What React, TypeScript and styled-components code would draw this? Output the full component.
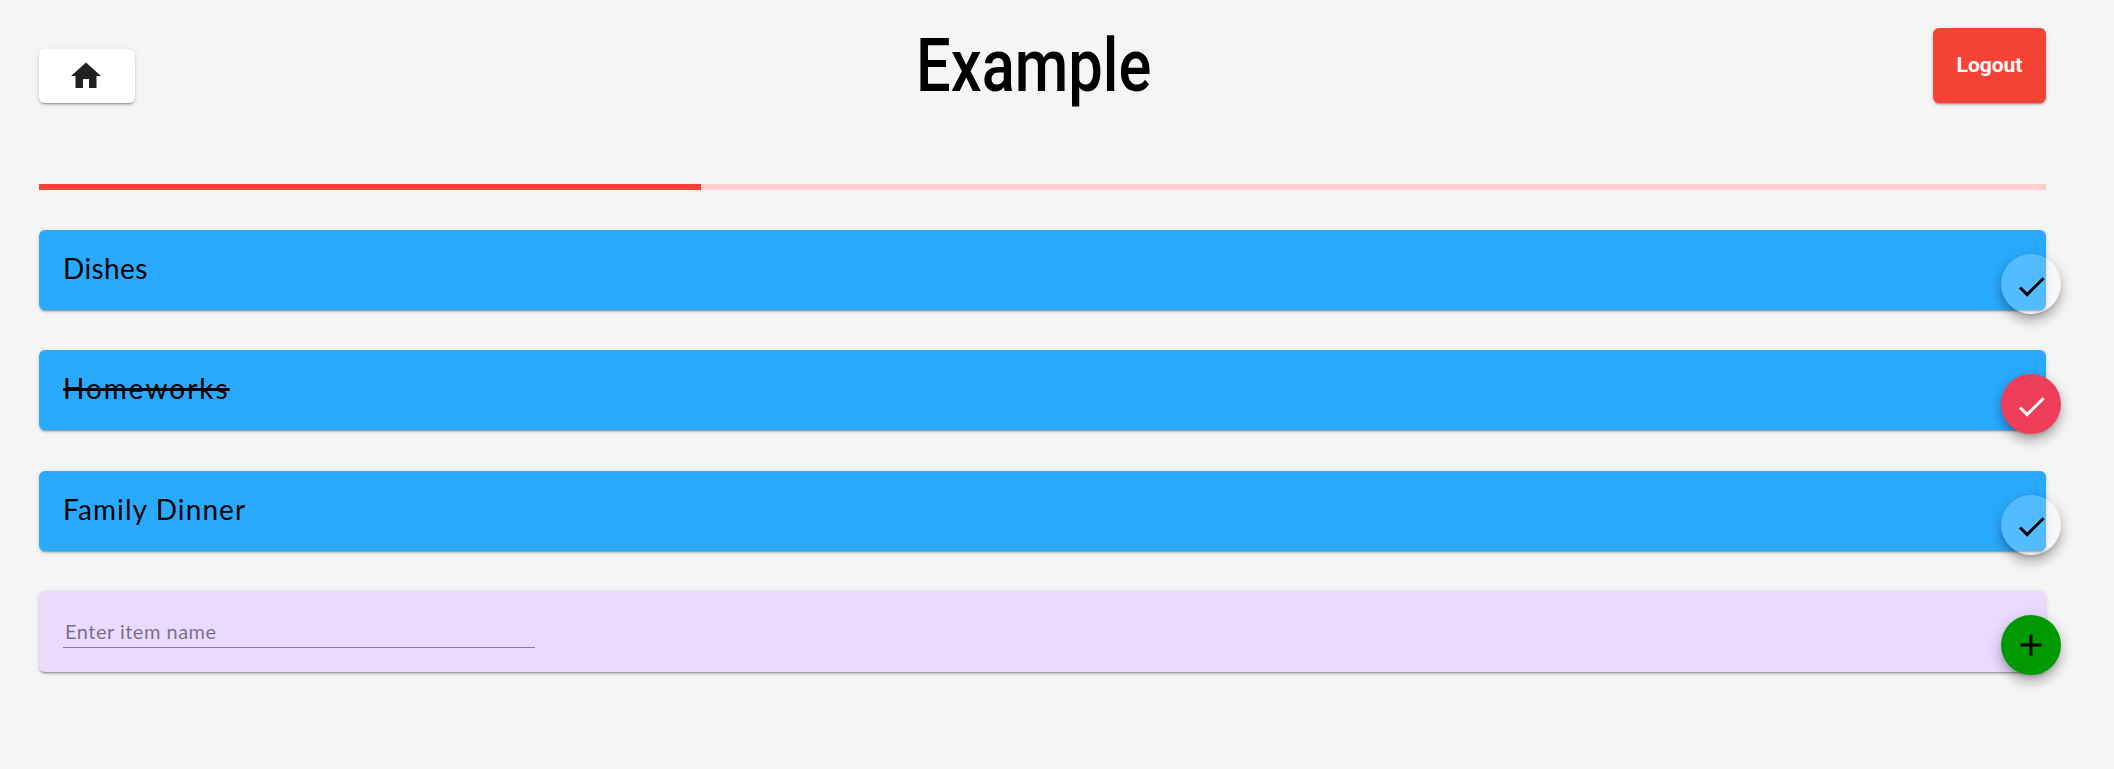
import React from "react"
import styled, { createGlobalStyle } from "styled-components"
import { MdAdd, MdCheck, MdHome } from "react-icons/md"

const GlobalStyle = createGlobalStyle`
  html, body {
    margin: 0;
    padding: 0;
    background: #f5f5f5;
    font-family: "Roboto", "Liberation Sans", sans-serif;
  }
`

const Page = styled.div`
  box-sizing: border-box;
  width: 2114px;
  height: 769px;
  padding: 28px 68px 0 39px;
  overflow: hidden;
`

const Header = styled.header`
  display: flex;
  justify-content: space-between;
  align-items: flex-end;
  height: 75px;
`

const HomeButton = styled.button`
  display: flex;
  align-items: center;
  justify-content: center;
  width: 96px;
  height: 54px;
  padding: 0 2px 0 0;
  border: 0;
  border-radius: 6px;
  background: #fff;
  color: #212121;
  box-shadow: 0 3px 1px -2px rgba(0, 0, 0, 0.2), 0 2px 2px 0 rgba(0, 0, 0, 0.14), 0 1px 5px 0 rgba(0, 0, 0, 0.12);
`

const Title = styled.h1`
  align-self: flex-start;
  margin: 0;
  font-family: "Roboto", sans-serif;
  font-size: 74px;
  font-weight: 500;
  line-height: 75px;
  color: #000;
  transform: scaleX(0.83);
`

const LogoutButton = styled.button`
  width: 113px;
  height: 75px;
  padding: 0 0 2px;
  border: 0;
  border-radius: 6px;
  background: #f44336;
  color: #fff;
  font-family: "Roboto", sans-serif;
  font-size: 21px;
  font-weight: 700;
  box-shadow: 0 3px 1px -2px rgba(0, 0, 0, 0.2), 0 2px 2px 0 rgba(0, 0, 0, 0.14), 0 1px 5px 0 rgba(0, 0, 0, 0.12);
`

const Progress = styled.div`
  height: 6px;
  margin-top: 81px;
  background: #ffcdd2;
`

const ProgressFill = styled.div`
  height: 100%;
  background: #f44336;
`

const List = styled.div`
  display: flex;
  flex-direction: column;
  gap: 40.33px;
  margin-top: 40px;
`

const Card = styled.div`
  position: relative;
  box-sizing: border-box;
  height: 80px;
  padding: 21px 24px 0;
  border-radius: 6px;
  background: #29aaff;
  box-shadow: 0 3px 1px -2px rgba(0, 0, 0, 0.2), 0 2px 2px 0 rgba(0, 0, 0, 0.14), 0 1px 5px 0 rgba(0, 0, 0, 0.12);
`

const InputCard = styled(Card)`
  height: 81px;
  background: #ebdaff;
`

const ItemName = styled.span<{ $done?: boolean; $tracking: number }>`
  font-family: "Lato", sans-serif;
  font-size: 28px;
  font-weight: 400;
  line-height: 34px;
  letter-spacing: ${(p) => p.$tracking}px;
  color: #000;
  text-decoration: ${(p) => (p.$done ? "line-through" : "none")};
  text-decoration-thickness: 3px;
`

const NameInput = styled.input`
  display: block;
  box-sizing: border-box;
  width: 472px;
  height: 36px;
  padding: 4px 0 0 2px;
  border: 0;
  border-bottom: 1px solid rgba(0, 0, 0, 0.42);
  outline: none;
  background: transparent;
  font-family: "Lato", sans-serif;
  font-size: 20px;
  font-weight: 400;
  letter-spacing: 0.5px;
  color: #000;

  &::placeholder {
    color: rgba(0, 0, 0, 0.5);
    opacity: 1;
  }
`

const Fab = styled.button<{ $bg: string; $color: string }>`
  position: absolute;
  right: -15px;
  bottom: -4px;
  display: flex;
  align-items: center;
  justify-content: center;
  width: 60px;
  height: 60px;
  padding: 0;
  border: 0;
  border-radius: 50%;
  background: ${(p) => p.$bg};
  color: ${(p) => p.$color};
  box-shadow: 0 5px 5px -3px rgba(0, 0, 0, 0.2), 0 8px 10px 1px rgba(0, 0, 0, 0.14), 0 3px 14px 2px rgba(0, 0, 0, 0.12);

  svg {
    transform: translate(0, 2px);
  }
`

const AddFab = styled(Fab)`
  bottom: -3px;

  svg {
    transform: none;
  }
`

const items = [
  { name: "Dishes", done: false, tracking: 0.4 },
  { name: "Homeworks", done: true, tracking: 2 },
  { name: "Family Dinner", done: false, tracking: 1.1 },
]

export default function App() {
  return (
    <Page>
      <GlobalStyle />
      <Header>
        <HomeButton aria-label="Home">
          <MdHome size={36} />
        </HomeButton>
        <Title>Example</Title>
        <LogoutButton>Logout</LogoutButton>
      </Header>
      <Progress>
        <ProgressFill style={{ width: "33%" }} />
      </Progress>
      <List>
        {items.map((item) => (
          <Card key={item.name}>
            <ItemName $done={item.done} $tracking={item.tracking}>
              {item.name}
            </ItemName>
            <Fab
              $bg={item.done ? "#ef3e5a" : "rgba(255, 255, 255, 0.2)"}
              $color={item.done ? "#fff" : "#000"}
            >
              <MdCheck size={35} />
            </Fab>
          </Card>
        ))}
        <InputCard>
          <NameInput placeholder="Enter item name" />
          <AddFab $bg="#009900" $color="#000">
            <MdAdd size={36} />
          </AddFab>
        </InputCard>
      </List>
    </Page>
  )
}
